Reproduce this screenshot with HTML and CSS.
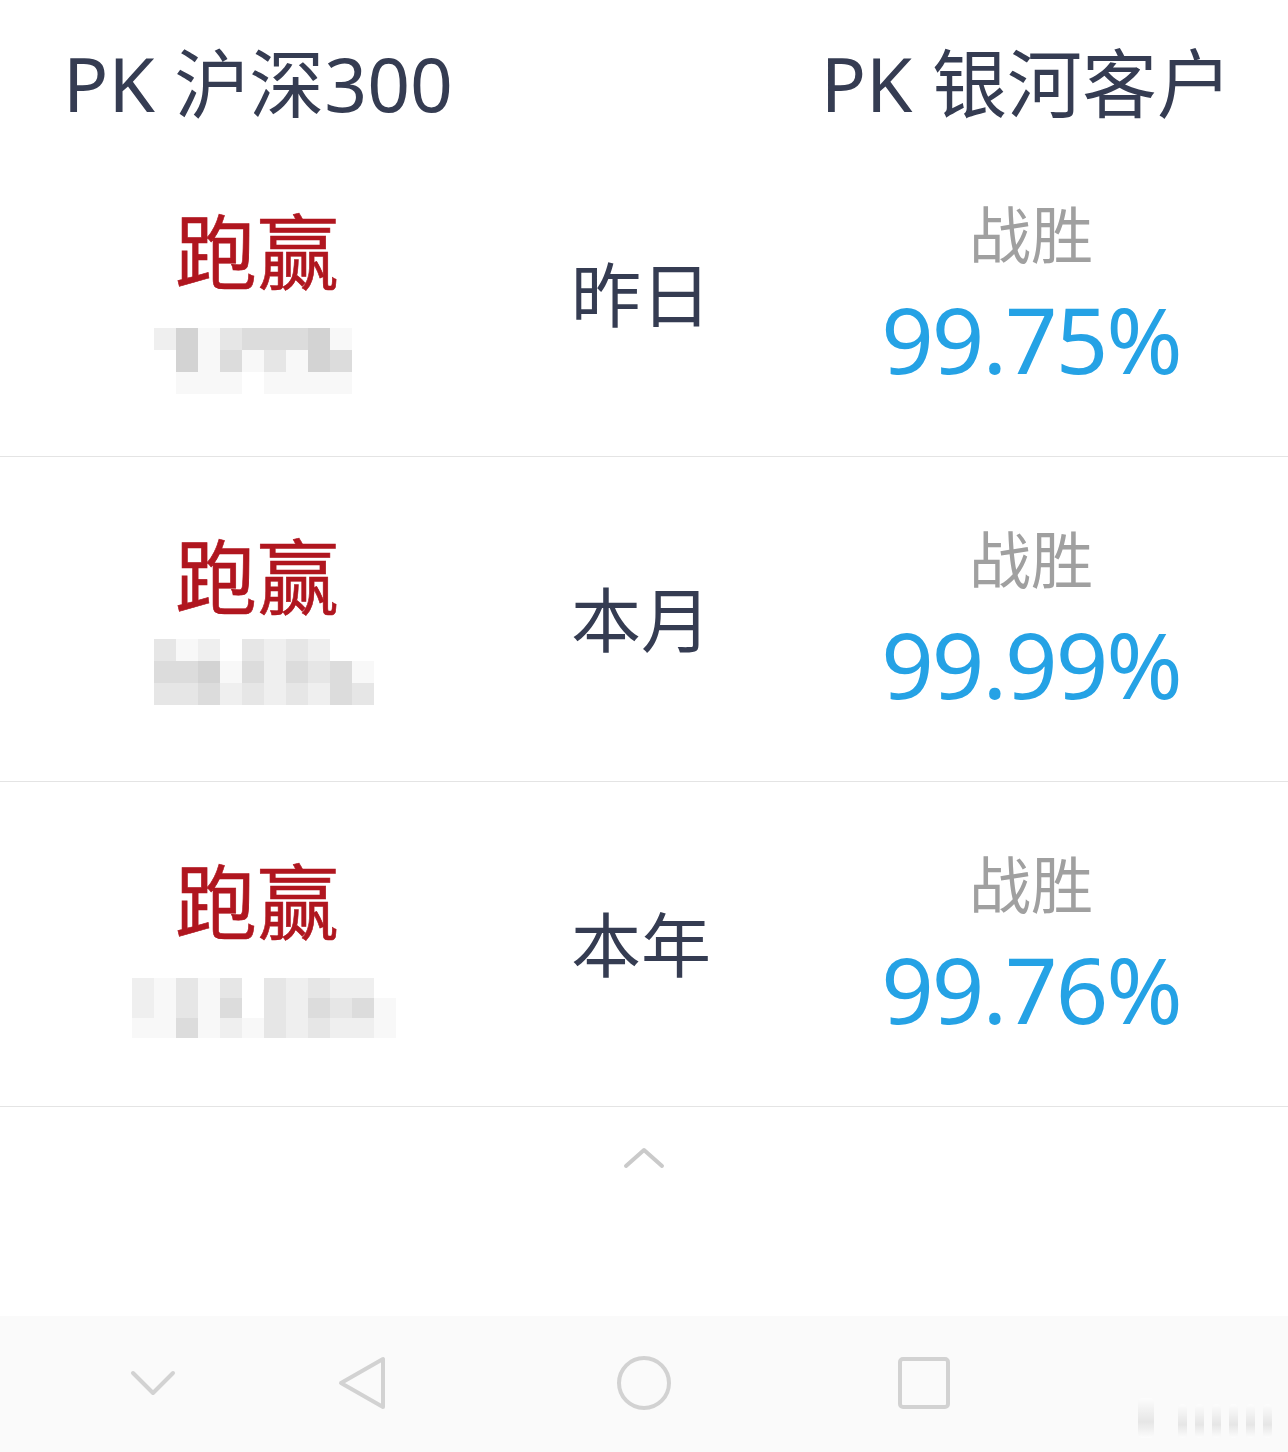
FILE: index.html
```html
<!DOCTYPE html>
<html lang="zh-CN">
<head>
    <meta charset="UTF-8">
    <meta name="viewport" content="width=device-width, initial-scale=1.0">
    <title>PK</title>
    <link rel="stylesheet" href="styles.css">
</head>
<body>
    <div class="screen">
        <div class="pk-header">
            <span class="pk-title">PK 沪深300</span>
            <span class="pk-title">PK 银河客户</span>
        </div>

        <!-- 昨日 -->
        <div class="pk-row">
            <div class="beat">
                <span class="beat-label">跑赢</span>
                <div class="mosaic cols-9">
                    <i class="s2"></i><i class="s5"></i><i class="s1"></i><i class="s3"></i><i class="s4"></i><i class="s4"></i><i class="s4"></i><i class="s5"></i><i class="s1"></i>
                    <i class="s0"></i><i class="s5"></i><i class="s1"></i><i class="s4"></i><i class="s1"></i><i class="s3"></i><i class="s1"></i><i class="s5"></i><i class="s4"></i>
                    <i class="s0"></i><i class="s1"></i><i class="s1"></i><i class="s1"></i><i class="s0"></i><i class="s1"></i><i class="s1"></i><i class="s1"></i><i class="s1"></i>
                </div>
            </div>
            <div class="period">昨日</div>
            <div class="rank">
                <span class="rank-label">战胜</span>
                <span class="rank-value">99.75%</span>
            </div>
        </div>

        <!-- 本月 -->
        <div class="pk-row">
            <div class="beat">
                <span class="beat-label">跑赢</span>
                <div class="mosaic cols-10 gap-sm">
                    <i class="s3"></i><i class="s1"></i><i class="s2"></i><i class="s0"></i><i class="s3"></i><i class="s2"></i><i class="s3"></i><i class="s2"></i><i class="s0"></i><i class="s0"></i>
                    <i class="s4"></i><i class="s4"></i><i class="s5"></i><i class="s1"></i><i class="s4"></i><i class="s2"></i><i class="s4"></i><i class="s3"></i><i class="s4"></i><i class="s1"></i>
                    <i class="s3"></i><i class="s3"></i><i class="s4"></i><i class="s2"></i><i class="s3"></i><i class="s2"></i><i class="s3"></i><i class="s2"></i><i class="s4"></i><i class="s3"></i>
                </div>
            </div>
            <div class="period">本月</div>
            <div class="rank">
                <span class="rank-label">战胜</span>
                <span class="rank-value">99.99%</span>
            </div>
        </div>

        <!-- 本年 -->
        <div class="pk-row">
            <div class="beat">
                <span class="beat-label">跑赢</span>
                <div class="mosaic cols-12">
                    <i class="s2"></i><i class="s1"></i><i class="s3"></i><i class="s1"></i><i class="s3"></i><i class="s0"></i><i class="s3"></i><i class="s2"></i><i class="s3"></i><i class="s2"></i><i class="s2"></i><i class="s0"></i>
                    <i class="s2"></i><i class="s1"></i><i class="s3"></i><i class="s1"></i><i class="s4"></i><i class="s0"></i><i class="s3"></i><i class="s2"></i><i class="s4"></i><i class="s3"></i><i class="s4"></i><i class="s1"></i>
                    <i class="s1"></i><i class="s1"></i><i class="s4"></i><i class="s1"></i><i class="s2"></i><i class="s1"></i><i class="s3"></i><i class="s2"></i><i class="s3"></i><i class="s2"></i><i class="s2"></i><i class="s1"></i>
                </div>
            </div>
            <div class="period">本年</div>
            <div class="rank">
                <span class="rank-label">战胜</span>
                <span class="rank-value">99.76%</span>
            </div>
        </div>

        <div class="collapse">
            <svg width="44" height="26" viewBox="0 0 44 26">
                <polyline points="4,22 22,6 40,22" fill="none" stroke="#cacaca" stroke-width="4" stroke-linecap="round" stroke-linejoin="round"/>
            </svg>
        </div>

        <div class="nav-bar">
            <div class="nav-item">
                <svg width="50" height="30" viewBox="0 0 50 30">
                    <polyline points="5,5 25,25 45,5" fill="none" stroke="#d2d2d2" stroke-width="4" stroke-linecap="round" stroke-linejoin="round"/>
                </svg>
            </div>
            <div class="nav-item">
                <svg width="56" height="60" viewBox="0 0 56 60">
                    <polygon points="6,30 48,6 48,54" fill="none" stroke="#d2d2d2" stroke-width="4" stroke-linejoin="round"/>
                </svg>
            </div>
            <div class="nav-item">
                <svg width="60" height="60" viewBox="0 0 60 60">
                    <circle cx="30" cy="30" r="25" fill="none" stroke="#d2d2d2" stroke-width="4"/>
                </svg>
            </div>
            <div class="nav-item">
                <svg width="56" height="56" viewBox="0 0 56 56">
                    <rect x="4" y="4" width="48" height="48" rx="3" fill="none" stroke="#d2d2d2" stroke-width="4"/>
                </svg>
            </div>
        </div>

        <div class="watermark">
            <i></i><i></i><i></i><i></i><i></i><i></i><i></i>
        </div>
    </div>
</body>
</html>
```

FILE: styles.css
```css
/* Reset */
body, div, span {
    margin: 0;
    padding: 0;
}

body {
    background-color: #ffffff;
    font-family: "Noto Sans", "Noto Sans CJK SC", sans-serif;
    color: #353c52;
}

.screen {
    position: relative;
    width: 1288px;
    height: 1452px;
    display: flex;
    flex-direction: column;
    overflow: hidden;
}

/* Header */
.pk-header {
    height: 132px;
    box-sizing: border-box;
    padding: 46px 56px 0 63px;
    display: flex;
    justify-content: space-between;
}

.pk-title {
    font-size: 75px;
    line-height: 1;
    color: #353c52;
}

/* Rows */
.pk-row {
    height: 325px;
    box-sizing: border-box;
    border-bottom: 1px solid #e4e4e4;
    display: grid;
    grid-template-columns: 514px 254px 1fr;
}

.beat {
    padding-top: 78px;
    display: flex;
    flex-direction: column;
    align-items: center;
    gap: 36px;
}

.beat-label {
    font-size: 82px;
    line-height: 1;
    color: #b0161f;
    -webkit-text-stroke: 0.6px #b0161f;
}

.mosaic {
    display: grid;
    grid-auto-rows: 22px;
    filter: blur(0.4px);
}

.mosaic.cols-9 { grid-template-columns: repeat(9, 22px); margin-right: 8px; }
.mosaic.cols-10 { grid-template-columns: repeat(10, 22px); margin-left: 14px; }
.mosaic.cols-12 { grid-template-columns: repeat(12, 22px); grid-auto-rows: 20px; margin-left: 14px; }
.mosaic.gap-sm { margin-top: -14px; }

.mosaic i { display: block; }
.mosaic .s0 { background-color: transparent; }
.mosaic .s1 { background-color: #f8f8f8; }
.mosaic .s2 { background-color: #efefef; }
.mosaic .s3 { background-color: #e6e6e6; }
.mosaic .s4 { background-color: #dcdcdc; }
.mosaic .s5 { background-color: #d3d3d3; }

.period {
    align-self: center;
    text-align: center;
    font-size: 70px;
    line-height: 1;
    color: #353c52;
    padding-top: 2px;
}

.rank {
    padding: 72px 0 0 6px;
    display: flex;
    flex-direction: column;
    align-items: center;
    gap: 27px;
}

.rank-label {
    font-size: 62px;
    line-height: 1;
    color: #a0a0a0;
}

.rank-value {
    font-family: "Noto Sans", sans-serif;
    font-size: 92px;
    line-height: 1;
    letter-spacing: -2px;
    color: #25a2e5;
}

/* Collapse arrow */
.collapse {
    height: 209px;
    display: flex;
    justify-content: center;
    padding-top: 37px;
    box-sizing: border-box;
}

/* System navigation bar */
.nav-bar {
    flex: 1;
    background-color: #fafafa;
    display: grid;
    grid-template-columns: 306px 114px 448px 112px;
    align-items: center;
    padding-bottom: 2px;
}

.nav-item {
    display: flex;
    justify-content: center;
}

/* Watermark */
.watermark {
    position: absolute;
    right: 16px;
    bottom: 14px;
    display: flex;
    gap: 8px;
    align-items: flex-end;
    opacity: 0.55;
}

.watermark i {
    display: block;
    width: 9px;
    height: 34px;
    border-radius: 4px;
    background: linear-gradient(#ffffff, #d6d6d6 60%, #ffffff);
}

.watermark i:first-child {
    width: 16px;
    height: 40px;
    margin-right: 16px;
}
```
